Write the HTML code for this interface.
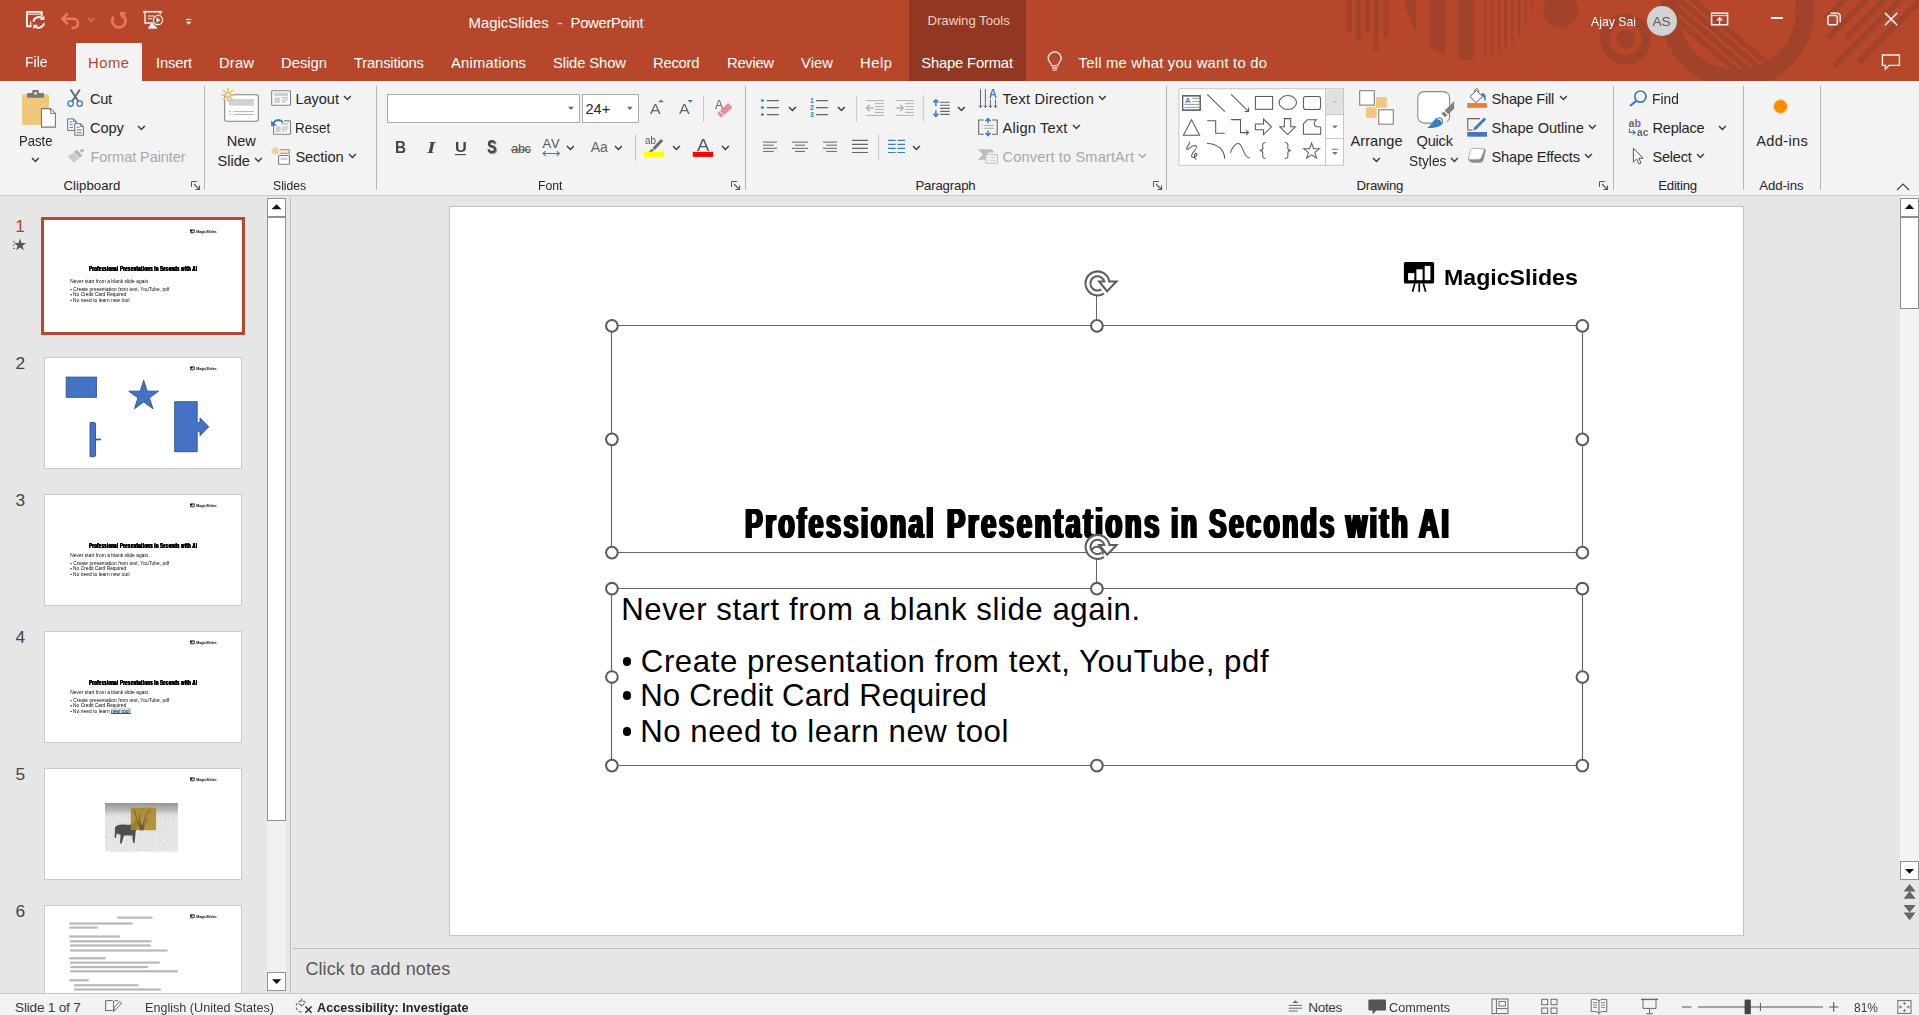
<!DOCTYPE html>
<html><head><meta charset="utf-8"><title>MagicSlides - PowerPoint</title>
<style>
*{box-sizing:border-box;margin:0;padding:0}
html,body{width:1919px;height:1015px;overflow:hidden;background:#e6e6e6;font-family:"Liberation Sans",sans-serif;color:#262626}
#app{position:relative;width:1919px;height:1015px;overflow:hidden}
#app div,#app span,#app svg{position:absolute}
#app svg{overflow:visible}
.t{white-space:nowrap;line-height:1}
#tb{left:0;top:0;width:1919px;height:81px;background:#b7472a;overflow:hidden}
#rb{left:0;top:81px;width:1919px;height:114px;background:#f3f3f3}
#rbl{left:0;top:195px;width:1919px;height:1px;background:#cbcbcb}
.sep{width:1px;background:#b4b4b4;top:86px;height:104px}
#sb{left:0;top:993px;width:1919px;height:22px;background:#f3f3f3}
</style></head><body><div id="app">
<div id="tb"></div><div id="rb"></div><div id="rbl"></div><div id="sb"></div>
<svg style="left:0;top:0;overflow:hidden" width="1919" height="81" viewBox="0 0 1919 81"><g fill="#a1432b"><rect x="1346.9" y="0" width="5" height="32.1"/><rect x="1356" y="0" width="4.7" height="41.3"/><rect x="1365.1" y="0" width="4.9" height="32.1"/><rect x="1373.3" y="0" width="5.1" height="51.9"/><rect x="1383.4" y="0" width="4.8" height="37.9"/><clipPath id="c1"><circle cx="1469.5" cy="-5" r="65"/></clipPath><g clip-path="url(#c1)"><rect x="1400" y="0" width="16" height="70"/><rect x="1429.4" y="0" width="16" height="70"/><rect x="1458" y="0" width="15.5" height="70"/><rect x="1484" y="0" width="2.7" height="70"/><rect x="1491.1" y="0" width="2.5" height="70"/><rect x="1498.2" y="0" width="2.2" height="70"/><rect x="1504.4" y="0" width="2.5" height="70"/><rect x="1511.1" y="0" width="2.5" height="70"/><rect x="1517.9" y="0" width="2.2" height="70"/><rect x="1524.4" y="0" width="2.4" height="70"/><rect x="1531" y="0" width="2.5" height="70"/></g><circle cx="1560.6" cy="10.4" r="17.4"/><circle cx="1625.6" cy="39.2" r="9.3"/><circle cx="1625.6" cy="39.2" r="20.7" fill="none" stroke="#a1432b" stroke-width="9.4"/><circle cx="1737" cy="11" r="67.9" fill="none" stroke="#a1432b" stroke-width="18.2"/><clipPath id="c2"><circle cx="1737" cy="11" r="59.5"/></clipPath><g clip-path="url(#c2)"><g transform="rotate(40.5 1737 11)"><rect x="1660" y="28.5" width="160" height="5.5"/><rect x="1660" y="37" width="160" height="5.5"/><rect x="1660" y="45.5" width="160" height="5.5"/><rect x="1660" y="54" width="160" height="5.5"/></g></g><path d="M1825 19 l90 -90" stroke="#a1432b" stroke-width="6" fill="none"/><path d="M1827.5 38.6 l90 -90" stroke="#a1432b" stroke-width="6" fill="none"/><path d="M1846 38.6 l90 -90" stroke="#a1432b" stroke-width="6" fill="none"/><path d="M1834 66.4 l90 -90" stroke="#a1432b" stroke-width="6" fill="none"/><path d="M1858.6 62.2 l90 -90" stroke="#a1432b" stroke-width="6" fill="none"/></g></svg><div style="left:909px;top:0px;width:117px;height:81px;background:#923822"></div><span class="t" style="left:927.50px;top:14px;font-size:13.2px;color:#f3cfc4;letter-spacing:-0.024px;">Drawing Tools</span><div style="left:76px;top:43px;width:66px;height:38px;background:#f3f3f3"></div><span class="t" style="left:468.60px;top:16px;font-size:14.8px;color:#ffffff;letter-spacing:0.022px;">MagicSlides</span><span class="t" style="left:557.60px;top:16px;font-size:14.8px;color:#ffffff;">-</span><span class="t" style="left:570.60px;top:16px;font-size:14.8px;color:#ffffff;letter-spacing:-0.297px;">PowerPoint</span><span class="t" style="left:25.00px;top:55px;font-size:14.8px;color:#ffffff;transform:scaleX(0.9436);transform-origin:0 0;">File</span><span class="t" style="left:88.00px;top:56px;font-size:14.8px;color:#b7472a;letter-spacing:0.505px;">Home</span><span class="t" style="left:156.00px;top:56px;font-size:14.8px;color:#ffffff;letter-spacing:-0.203px;">Insert</span><span class="t" style="left:219.00px;top:56px;font-size:14.8px;color:#ffffff;letter-spacing:0.156px;">Draw</span><span class="t" style="left:281.00px;top:56px;font-size:14.8px;color:#ffffff;letter-spacing:-0.013px;">Design</span><span class="t" style="left:354.00px;top:56px;font-size:14.8px;color:#ffffff;letter-spacing:-0.183px;">Transitions</span><span class="t" style="left:451.00px;top:56px;font-size:14.8px;color:#ffffff;letter-spacing:0.200px;">Animations</span><span class="t" style="left:553.00px;top:56px;font-size:14.8px;color:#ffffff;letter-spacing:-0.115px;">Slide Show</span><span class="t" style="left:653.00px;top:56px;font-size:14.8px;color:#ffffff;letter-spacing:-0.241px;">Record</span><span class="t" style="left:727.00px;top:56px;font-size:14.8px;color:#ffffff;letter-spacing:-0.306px;">Review</span><span class="t" style="left:801.00px;top:56px;font-size:14.8px;color:#ffffff;letter-spacing:0.062px;">View</span><span class="t" style="left:860.00px;top:56px;font-size:14.8px;color:#ffffff;letter-spacing:0.521px;">Help</span><span class="t" style="left:921.30px;top:56px;font-size:14.8px;color:#ffffff;letter-spacing:-0.188px;">Shape Format</span><span class="t" style="left:1078.60px;top:56px;font-size:14.8px;color:#ffffff;letter-spacing:0.219px;">Tell me what you want to do</span><svg style="left:24px;top:8px;" width="24" height="24" viewBox="0 0 24 24"><path d="M2.9 3.9 H17.7 V8.6 M2.9 3 V18.2 H7.6" fill="none" stroke="#f4f4f4" stroke-width="1.9"/><path d="M4 6.1 H17" fill="none" stroke="#f4f4f4" stroke-width="1.1"/><path d="M6.7 13.4 V18.2" fill="none" stroke="#f4f4f4" stroke-width="1.2"/><path d="M9.4 13.6 A5.5 5.5 0 0 1 19 11" fill="none" stroke="#f4f4f4" stroke-width="1.9"/><path d="M20.2 15.2 A5.5 5.5 0 0 1 10.6 17.8" fill="none" stroke="#f4f4f4" stroke-width="1.9"/><path d="M15.9 12 H20.3 V7.6 Z" fill="#f4f4f4"/><path d="M13.7 16.8 H9.3 V21.2 Z" fill="#f4f4f4"/></svg><svg style="left:59px;top:10px;" width="24" height="22" viewBox="0 0 24 22"><path d="M3.8 8.8 H14.4 A4.6 4.6 0 0 1 14.4 18 L12.8 18" fill="none" stroke="#ea7563" stroke-width="2.6" stroke-linejoin="round"/><path d="M8.8 3.4 L3.2 8.8 L8.8 14.2" fill="none" stroke="#ea7563" stroke-width="2.6"/></svg><svg style="left:87.20px;top:16.90px" width="8.60" height="5.40" viewBox="-1 -1 8.60 5.40"><path d="M0 0 L3.30 3.40 L6.60 0" fill="none" stroke="#ea7563" stroke-width="1.3"/></svg><svg style="left:108px;top:9px;" width="22" height="22" viewBox="0 0 22 22"><path d="M12.6 5.2 A6.7 6.7 0 1 1 5.6 7.6" fill="none" stroke="#ea7563" stroke-width="2.7"/><path d="M11.6 2.6 L18.6 3.4 L13.8 9.8 Z" fill="#ea7563"/></svg><svg style="left:141px;top:9px;" width="26" height="22" viewBox="0 0 26 22"><path d="M2 2.7 H21.2" stroke="#f4f4f4" stroke-width="1.6"/><path d="M4 3 V14 H12.5" fill="none" stroke="#f4f4f4" stroke-width="1.4"/><path d="M19.2 3 V5.5" fill="none" stroke="#f4f4f4" stroke-width="1.4"/><path d="M6.8 7 H13 M6.8 9.8 H11.2" stroke="#f4f4f4" stroke-width="1.1"/><circle cx="17" cy="11" r="4.6" fill="none" stroke="#f4f4f4" stroke-width="1.2"/><path d="M15.5 8.3 L19.3 11 L15.5 13.7 Z" fill="#f4f4f4"/><path d="M10.5 14.5 L7.3 19.2 H16 L13 15.5" fill="#f4f4f4" stroke="#f4f4f4" stroke-width="0.8"/></svg><svg style="left:184px;top:17px;" width="10" height="10" viewBox="0 0 10 10"><path d="M2.1 2.5 H7.3" stroke="#f4f4f4" stroke-width="1.2"/><path d="M1.9 4.8 H7.5 L4.7 7.8 Z" fill="#f4f4f4"/></svg><svg style="left:1709px;top:10px;" width="22" height="18" viewBox="0 0 22 18"><rect x="2.6" y="3.2" width="16" height="11.6" fill="none" stroke="#f4f4f4" stroke-width="1.5"/><path d="M2.6 5.6 H18.6" stroke="#f4f4f4" stroke-width="1"/><path d="M10.6 14 V8 M7.9 10.6 L10.6 7.9 L13.3 10.6" fill="none" stroke="#f4f4f4" stroke-width="1.4"/></svg><div style="left:1770.8px;top:17.4px;width:12.2px;height:1.5px;background:#f4f4f4"></div><svg style="left:1825px;top:10px;" width="18" height="18" viewBox="0 0 18 18"><rect x="2.9" y="5.4" width="9.4" height="9.4" rx="1.8" fill="none" stroke="#f4f4f4" stroke-width="1.45"/><path d="M5.6 3.2 H12.2 A3 3 0 0 1 15.2 6.2 V12.2" fill="none" stroke="#f4f4f4" stroke-width="1.45"/></svg><svg style="left:1882px;top:10px;" width="18" height="18" viewBox="0 0 18 18"><path d="M2.9 2.9 L15.3 15.3 M15.3 2.9 L2.9 15.3" stroke="#f4f4f4" stroke-width="1.5"/></svg><svg style="left:1880px;top:52px;" width="22" height="20" viewBox="0 0 22 20"><path d="M2.4 3 H19.4 V13.4 H9 L5.4 17 V13.4 H2.4 Z" fill="none" stroke="#f4f4f4" stroke-width="1.4"/></svg><svg style="left:1045px;top:50px;" width="20" height="24" viewBox="0 0 20 24"><path d="M6.6 15.6 C6.4 12.8 3.2 11.6 3.2 8.3 A6.5 6.5 0 0 1 16.2 8.3 C16.2 11.6 13 12.8 12.8 15.6 Z" fill="none" stroke="#f4f4f4" stroke-width="1.3"/><path d="M6.9 17.8 H12.5 M7.4 20 H12 " stroke="#f4f4f4" stroke-width="1.2"/></svg><span class="t" style="left:1591.00px;top:15px;font-size:13.6px;color:#ffffff;transform:scaleX(0.9023);transform-origin:0 0;">Ajay Sai</span><div style="left:1646.8px;top:5.8px;width:30px;height:30px;border-radius:50%;background:#d2d2d2"></div><span class="t" style="left:1652.50px;top:15px;font-size:13.6px;color:#5a5a5a;letter-spacing:-0.141px;">AS</span>
<div class="sep" style="left:204.0px"></div><div class="sep" style="left:376.0px"></div><div class="sep" style="left:744.5px"></div><div class="sep" style="left:1166.0px"></div><div class="sep" style="left:1613.0px"></div><div class="sep" style="left:1742.8px"></div><div class="sep" style="left:1820.1px"></div><span class="t" style="left:19.20px;top:134px;font-size:14.6px;color:#262626;transform:scaleX(0.8974);transform-origin:0 0;">Paste</span><svg style="left:30.90px;top:156.55px" width="8.80" height="5.50" viewBox="-1 -1 8.80 5.50"><path d="M0 0 L3.40 3.50 L6.80 0" fill="none" stroke="#3a3a3a" stroke-width="1.45"/></svg><span class="t" style="left:90.10px;top:92px;font-size:14.6px;color:#262626;letter-spacing:-0.409px;">Cut</span><span class="t" style="left:90.10px;top:121px;font-size:14.6px;color:#262626;letter-spacing:-0.126px;">Copy</span><svg style="left:136.80px;top:124.85px" width="8.80" height="5.50" viewBox="-1 -1 8.80 5.50"><path d="M0 0 L3.40 3.50 L6.80 0" fill="none" stroke="#3a3a3a" stroke-width="1.45"/></svg><span class="t" style="left:90.50px;top:150px;font-size:14.6px;color:#a8a8a8;letter-spacing:-0.101px;">Format Painter</span><span class="t" style="left:63.40px;top:179px;font-size:13.2px;color:#262626;letter-spacing:0.068px;">Clipboard</span><svg style="left:190.5px;top:180.5px;" width="10" height="10" viewBox="0 0 10 10"><path d="M0.5 3.5 V0.5 H3.5 M0.5 0.5 H9.5 M0.5 0.5" fill="none" stroke="none"/><path d="M0.5 6 V0.5 H6" fill="none" stroke="#555" stroke-width="1"/><path d="M3 3 L8.5 8.5 M8.5 4.5 V8.5 H4.5" fill="none" stroke="#555" stroke-width="1.1"/></svg><span class="t" style="left:226.70px;top:134px;font-size:14.6px;color:#262626;letter-spacing:-0.052px;">New</span><span class="t" style="left:217.40px;top:154px;font-size:14.6px;color:#262626;letter-spacing:0.037px;">Slide</span><svg style="left:254.00px;top:156.55px" width="8.80" height="5.50" viewBox="-1 -1 8.80 5.50"><path d="M0 0 L3.40 3.50 L6.80 0" fill="none" stroke="#3a3a3a" stroke-width="1.45"/></svg><span class="t" style="left:295.40px;top:92px;font-size:14.6px;color:#262626;letter-spacing:-0.046px;">Layout</span><svg style="left:343.10px;top:94.85px" width="8.80" height="5.50" viewBox="-1 -1 8.80 5.50"><path d="M0 0 L3.40 3.50 L6.80 0" fill="none" stroke="#3a3a3a" stroke-width="1.45"/></svg><span class="t" style="left:295.40px;top:121px;font-size:14.6px;color:#262626;transform:scaleX(0.9259);transform-origin:0 0;">Reset</span><span class="t" style="left:295.40px;top:150px;font-size:14.6px;color:#262626;letter-spacing:-0.081px;">Section</span><svg style="left:348.10px;top:152.65px" width="8.80" height="5.50" viewBox="-1 -1 8.80 5.50"><path d="M0 0 L3.40 3.50 L6.80 0" fill="none" stroke="#3a3a3a" stroke-width="1.45"/></svg><span class="t" style="left:273.30px;top:179px;font-size:13.2px;color:#262626;transform:scaleX(0.9242);transform-origin:0 0;">Slides</span><div style="left:387px;top:94px;width:193px;height:29px;background:#fff;border:1px solid #ababab"></div><div style="left:582px;top:94px;width:57px;height:29px;background:#fff;border:1px solid #ababab"></div><span class="t" style="left:585.40px;top:102px;font-size:14.6px;color:#262626;letter-spacing:0.017px;">24+</span><span class="t" style="left:538.30px;top:179px;font-size:13.2px;color:#262626;transform:scaleX(0.9246);transform-origin:0 0;">Font</span><svg style="left:731px;top:180.5px;" width="10" height="10" viewBox="0 0 10 10"><path d="M0.5 3.5 V0.5 H3.5 M0.5 0.5 H9.5 M0.5 0.5" fill="none" stroke="none"/><path d="M0.5 6 V0.5 H6" fill="none" stroke="#555" stroke-width="1"/><path d="M3 3 L8.5 8.5 M8.5 4.5 V8.5 H4.5" fill="none" stroke="#555" stroke-width="1.1"/></svg><span class="t" style="left:1002.60px;top:92px;font-size:14.6px;color:#262626;letter-spacing:0.215px;">Text Direction</span><svg style="left:1097.90px;top:94.75px" width="8.80" height="5.50" viewBox="-1 -1 8.80 5.50"><path d="M0 0 L3.40 3.50 L6.80 0" fill="none" stroke="#3a3a3a" stroke-width="1.45"/></svg><span class="t" style="left:1002.60px;top:121px;font-size:14.6px;color:#262626;letter-spacing:0.198px;">Align Text</span><svg style="left:1072.00px;top:123.85px" width="8.80" height="5.50" viewBox="-1 -1 8.80 5.50"><path d="M0 0 L3.40 3.50 L6.80 0" fill="none" stroke="#3a3a3a" stroke-width="1.45"/></svg><span class="t" style="left:1002.60px;top:150px;font-size:14.6px;color:#a8a8a8;letter-spacing:0.136px;">Convert to SmartArt</span><svg style="left:1138.00px;top:152.55px" width="8.80" height="5.50" viewBox="-1 -1 8.80 5.50"><path d="M0 0 L3.40 3.50 L6.80 0" fill="none" stroke="#a8a8a8" stroke-width="1.45"/></svg><span class="t" style="left:915.40px;top:179px;font-size:13.2px;color:#262626;letter-spacing:-0.162px;">Paragraph</span><svg style="left:1152.5px;top:180.5px;" width="10" height="10" viewBox="0 0 10 10"><path d="M0.5 3.5 V0.5 H3.5 M0.5 0.5 H9.5 M0.5 0.5" fill="none" stroke="none"/><path d="M0.5 6 V0.5 H6" fill="none" stroke="#555" stroke-width="1"/><path d="M3 3 L8.5 8.5 M8.5 4.5 V8.5 H4.5" fill="none" stroke="#555" stroke-width="1.1"/></svg><span class="t" style="left:1350.60px;top:134px;font-size:14.6px;color:#262626;letter-spacing:0.013px;">Arrange</span><svg style="left:1371.80px;top:156.55px" width="8.80" height="5.50" viewBox="-1 -1 8.80 5.50"><path d="M0 0 L3.40 3.50 L6.80 0" fill="none" stroke="#3a3a3a" stroke-width="1.45"/></svg><span class="t" style="left:1416.50px;top:134px;font-size:14.6px;color:#262626;letter-spacing:-0.203px;">Quick</span><span class="t" style="left:1408.60px;top:154px;font-size:14.6px;color:#262626;transform:scaleX(0.9409);transform-origin:0 0;">Styles</span><svg style="left:1450.40px;top:156.55px" width="8.80" height="5.50" viewBox="-1 -1 8.80 5.50"><path d="M0 0 L3.40 3.50 L6.80 0" fill="none" stroke="#3a3a3a" stroke-width="1.45"/></svg><span class="t" style="left:1491.50px;top:92px;font-size:14.6px;color:#262626;letter-spacing:-0.234px;">Shape Fill</span><svg style="left:1559.00px;top:94.85px" width="8.80" height="5.50" viewBox="-1 -1 8.80 5.50"><path d="M0 0 L3.40 3.50 L6.80 0" fill="none" stroke="#3a3a3a" stroke-width="1.45"/></svg><span class="t" style="left:1491.50px;top:121px;font-size:14.6px;color:#262626;letter-spacing:-0.017px;">Shape Outline</span><svg style="left:1588.20px;top:124.05px" width="8.80" height="5.50" viewBox="-1 -1 8.80 5.50"><path d="M0 0 L3.40 3.50 L6.80 0" fill="none" stroke="#3a3a3a" stroke-width="1.45"/></svg><span class="t" style="left:1491.50px;top:150px;font-size:14.6px;color:#262626;letter-spacing:-0.176px;">Shape Effects</span><svg style="left:1584.20px;top:153.05px" width="8.80" height="5.50" viewBox="-1 -1 8.80 5.50"><path d="M0 0 L3.40 3.50 L6.80 0" fill="none" stroke="#3a3a3a" stroke-width="1.45"/></svg><span class="t" style="left:1356.50px;top:179px;font-size:13.2px;color:#262626;letter-spacing:-0.263px;">Drawing</span><svg style="left:1599px;top:180.5px;" width="10" height="10" viewBox="0 0 10 10"><path d="M0.5 3.5 V0.5 H3.5 M0.5 0.5 H9.5 M0.5 0.5" fill="none" stroke="none"/><path d="M0.5 6 V0.5 H6" fill="none" stroke="#555" stroke-width="1"/><path d="M3 3 L8.5 8.5 M8.5 4.5 V8.5 H4.5" fill="none" stroke="#555" stroke-width="1.1"/></svg><span class="t" style="left:1652.40px;top:92px;font-size:14.6px;color:#262626;transform:scaleX(0.9475);transform-origin:0 0;">Find</span><span class="t" style="left:1652.40px;top:121px;font-size:14.6px;color:#262626;letter-spacing:-0.208px;">Replace</span><svg style="left:1717.80px;top:124.85px" width="8.80" height="5.50" viewBox="-1 -1 8.80 5.50"><path d="M0 0 L3.40 3.50 L6.80 0" fill="none" stroke="#3a3a3a" stroke-width="1.45"/></svg><span class="t" style="left:1652.40px;top:150px;font-size:14.6px;color:#262626;letter-spacing:-0.233px;">Select</span><svg style="left:1695.80px;top:152.85px" width="8.80" height="5.50" viewBox="-1 -1 8.80 5.50"><path d="M0 0 L3.40 3.50 L6.80 0" fill="none" stroke="#3a3a3a" stroke-width="1.45"/></svg><span class="t" style="left:1658.20px;top:179px;font-size:13.2px;color:#262626;letter-spacing:-0.221px;">Editing</span><div style="left:1774.4px;top:100.1px;width:13px;height:13px;border-radius:50%;background:#ff8c00;box-shadow:0 0 1.5px #ff8c00"></div><span class="t" style="left:1756.30px;top:134px;font-size:14.6px;color:#262626;letter-spacing:0.336px;">Add-ins</span><span class="t" style="left:1759.20px;top:179px;font-size:13.2px;color:#262626;letter-spacing:-0.053px;">Add-ins</span><svg style="left:1896px;top:183px;" width="14" height="8" viewBox="0 0 14 8"><path d="M1 7 L7 1 L13 7" fill="none" stroke="#444" stroke-width="1.2"/></svg><svg style="left:0;top:0" width="1919" height="200" viewBox="0 0 1919 200"><rect x="22" y="94.2" width="27" height="30.8" rx="1.6" fill="#efc77d"/><rect x="32.2" y="90" width="6.6" height="4" rx="1" fill="#787878"/><rect x="27.1" y="92.9" width="16.9" height="4.9" rx="0.8" fill="#787878"/><rect x="34.4" y="92.2" width="2.3" height="2.3" fill="#fff"/><path d="M41.5 108.6 H50.6 L55.4 113.4 V127.1 H41.5 Z" fill="#fff" stroke="#787878" stroke-width="1.1"/><path d="M50.6 108.6 V113.4 H55.4" fill="none" stroke="#787878" stroke-width="1"/><path d="M70.6 89.4 L78.3 101.2 M79.9 89.4 L72.2 101.2" stroke="#6a6a6a" stroke-width="1.9" fill="none"/><circle cx="70.6" cy="103.6" r="2.7" fill="none" stroke="#3b7cc0" stroke-width="1.3"/><circle cx="79.7" cy="103.6" r="2.7" fill="none" stroke="#3b7cc0" stroke-width="1.3"/><path d="M67.7 118.9 H73.6 L76.3 121.6 V130.4 H67.7 Z" fill="#fff" stroke="#6a6a6a" stroke-width="1"/><path d="M73.6 118.9 V121.6 H76.3" fill="none" stroke="#6a6a6a" stroke-width="0.9"/><path d="M69.6 122 H72.6 M69.6 124.8 H72.9 M69.6 127.6 H72.9" stroke="#3b7cc0" stroke-width="1"/><path d="M74.8 123.7 H80.6 L83.4 126.5 V135.2 H74.8 Z" fill="#fff" stroke="#6a6a6a" stroke-width="1"/><path d="M80.6 123.7 V126.5 H83.4" fill="none" stroke="#6a6a6a" stroke-width="0.9"/><path d="M76.7 127.2 H79.6 M76.7 130 H81.7 M76.7 132.7 H81.7" stroke="#3b7cc0" stroke-width="1"/><path d="M67.8 156.2 L74.2 152.6 L79 158.4 L73.8 162.8 Z" fill="#cfcacf"/><path d="M74.2 151.8 L76.8 149.8 L82.2 155.6 L79.6 157.8 Z" fill="#b5b2b5"/><path d="M79.6 150.6 L82.8 148.4 L84.4 150.4 L81.4 152.8 Z" fill="#b5b2b5"/><rect x="224.7" y="94.7" width="33.6" height="26.6" rx="2.2" fill="#fff" stroke="#808080" stroke-width="1.1"/><rect x="229" y="99" width="25" height="6.7" fill="#d0d0d0"/><path d="M229 111.6 H231 M233.3 111.6 H254 M229 114.6 H231 M233.3 114.6 H254" stroke="#a8a8a8" stroke-width="0.9"/><path d="M229.26 94.90 L234.90 94.90 M228.89 95.79 L232.88 99.78 M228.00 96.16 L228.00 101.80 M227.11 95.79 L223.12 99.78 M226.74 94.90 L221.10 94.90 M227.11 94.01 L223.12 90.02 M228.00 93.64 L228.00 88.00 M228.89 94.01 L232.88 90.02" stroke="#ebbf78" stroke-width="1.7" fill="none"/><circle cx="228" cy="94.9" r="2.1" fill="#fff" stroke="#ebbf78" stroke-width="1.36"/><rect x="271.7" y="90.7" width="18.8" height="14.5" rx="0.8" fill="#fff" stroke="#808080" stroke-width="1.1"/><rect x="274.2" y="92.6" width="13.8" height="3.6" fill="#d0d0d0"/><rect x="274.2" y="97.4" width="5.8" height="5.7" fill="#d0d0d0"/><path d="M281.8 97.8 H288 M281.8 99.9 H288 M281.8 102 H286" stroke="#a8a8a8" stroke-width="0.9"/><rect x="273.6" y="120.9" width="16.9" height="13.4" rx="0.8" fill="#fff" stroke="#808080" stroke-width="1.1"/><rect x="275.6" y="126.2" width="5.2" height="6.2" fill="#d0d0d0"/><rect x="281" y="122.6" width="7.7" height="2.4" fill="#d0d0d0"/><path d="M282 127 H288.6 M282 129 H288.6 M282 131 H286.6" stroke="#a8a8a8" stroke-width="0.9"/><path d="M272.6 124.6 C273.6 119.6 280.4 117.8 283.2 122.4" fill="none" stroke="#f3f3f3" stroke-width="3.4"/><path d="M273.2 124.2 C274.2 119.8 280.4 118.4 282.8 122.6" fill="none" stroke="#3b7cc0" stroke-width="1.9"/><path d="M270.9 120.6 L271.3 126.2 L276.9 125.4 Z" fill="#3b7cc0"/><path d="M276.22 150.60 L279.60 150.60 M276.01 151.11 L278.40 153.50 M275.50 151.32 L275.50 154.70 M274.99 151.11 L272.60 153.50 M274.78 150.60 L271.40 150.60 M274.99 150.09 L272.60 147.70 M275.50 149.88 L275.50 146.50 M276.01 150.09 L278.40 147.70" stroke="#ebbf78" stroke-width="1.1" fill="none"/><circle cx="275.5" cy="150.6" r="1.2" fill="#fff" stroke="#ebbf78" stroke-width="0.8800000000000001"/><path d="M280.2 149.7 H289.3 V153.2 H280.2" fill="none" stroke="#e8722a" stroke-width="1.1"/><rect x="278.6" y="155.5" width="10.8" height="8.8" rx="0.6" fill="#fff" stroke="#808080" stroke-width="1.1"/><rect x="280.6" y="157.5" width="6.8" height="2.6" fill="#d0d0d0"/><path d="M568 106.8 H573.8 L570.9 110.1 Z" fill="#666"/><path d="M627 106.8 H632.8 L629.9 110.1 Z" fill="#666"/><path d="M658.1 102.2 L661 99.6 L663.9 102.2 Z" fill="#3b7cc0"/><path d="M687.3 99.9 H693.1 L690.2 102.7 Z" fill="#3b7cc0"/><path d="M703.5 95.2 V121.7 M635.5 134.3 V160.8" stroke="#c6c6c6" stroke-width="1"/><g transform="rotate(-43 724.85 110.35)"><rect x="717.25" y="107.3" width="15.2" height="6.1" rx="1.2" fill="#e88b9b"/><rect x="720.2" y="107.3" width="0.9" height="6.1" fill="#f3f3f3"/></g><path d="M454.9 154.6 H465.9" stroke="#444" stroke-width="1.1"/><path d="M510.6 149.9 H531.3" stroke="#555" stroke-width="1"/><path d="M543 153.5 H559.4 M545.6 151.2 L543 153.5 L545.6 155.8 M556.8 151.2 L559.4 153.5 L556.8 155.8" fill="none" stroke="#3b7cc0" stroke-width="1.1"/><rect x="643.9" y="151.8" width="20.2" height="5.1" fill="#ffff00"/><rect x="692.8" y="151.8" width="20.3" height="5.1" fill="#ff0000"/><path d="M661 138.9 L663.3 140.8 L654.8 150 L652.5 148.1 Z" fill="#6a6a6a"/><path d="M652 148.7 L654.2 150.6 L651.6 151.8 H648.6 Z" fill="#6a6a6a"/></svg><span class="t" style="left:394.50px;top:139px;font-size:16.3px;color:#444;font-weight:700;transform:scaleX(0.9434);transform-origin:0 0;">B</span><span class="t" style="left:427.20px;top:139px;font-size:17.6px;color:#444;font-weight:700;font-style:italic;font-family:'Liberation Serif',serif;transform:scaleX(1.25);transform-origin:0 0;">I</span><span class="t" style="left:454.60px;top:139px;font-size:15px;color:#444;font-weight:700;transform:scaleX(1.0882);transform-origin:0 0;">U</span><span class="t" style="left:486.60px;top:137px;font-size:19px;color:#444;font-weight:700;text-shadow:1.2px 1.2px 1.2px rgba(0,0,0,0.45);transform:scaleX(0.75);transform-origin:0 0;">S</span><span class="t" style="left:511.20px;top:143px;font-size:12.6px;color:#555;letter-spacing:-0.306px;">abc</span><span class="t" style="left:542.60px;top:137px;font-size:13px;color:#555;letter-spacing:0.709px;">AV</span><svg style="left:566.00px;top:144.65px" width="8.80" height="5.50" viewBox="-1 -1 8.80 5.50"><path d="M0 0 L3.40 3.50 L6.80 0" fill="none" stroke="#3a3a3a" stroke-width="1.45"/></svg><svg style="left:614.00px;top:144.65px" width="8.80" height="5.50" viewBox="-1 -1 8.80 5.50"><path d="M0 0 L3.40 3.50 L6.80 0" fill="none" stroke="#3a3a3a" stroke-width="1.45"/></svg><svg style="left:672.10px;top:144.65px" width="8.80" height="5.50" viewBox="-1 -1 8.80 5.50"><path d="M0 0 L3.40 3.50 L6.80 0" fill="none" stroke="#3a3a3a" stroke-width="1.45"/></svg><svg style="left:720.90px;top:144.65px" width="8.80" height="5.50" viewBox="-1 -1 8.80 5.50"><path d="M0 0 L3.40 3.50 L6.80 0" fill="none" stroke="#3a3a3a" stroke-width="1.45"/></svg><span class="t" style="left:590.70px;top:140px;font-size:14px;color:#666;letter-spacing:-0.125px;">Aa</span><span class="t" style="left:650.10px;top:102px;font-size:14.6px;color:#666;transform:scaleX(1.0889);transform-origin:0 0;">A</span><span class="t" style="left:679.00px;top:102px;font-size:14px;color:#666;transform:scaleX(1.1452);transform-origin:0 0;">A</span><span class="t" style="left:714.70px;top:98px;font-size:13.6px;color:#666;transform:scaleX(0.9033);transform-origin:0 0;">A</span><span class="t" style="left:644.60px;top:135px;font-size:10.6px;color:#555;transform:scaleX(0.9240);transform-origin:0 0;">ab</span><span class="t" style="left:696.70px;top:137px;font-size:17.2px;color:#555;transform:scaleX(1.0812);transform-origin:0 0;">A</span><svg style="left:0;top:0" width="1919" height="200" viewBox="0 0 1919 200"><circle cx="762.4" cy="100.6" r="1.45" fill="#3b7cc0"/><circle cx="762.4" cy="107.6" r="1.45" fill="#3b7cc0"/><circle cx="762.4" cy="114.6" r="1.45" fill="#3b7cc0"/><path d="M766.9 100.6 H778.9 M766.9 107.6 H778.9 M766.9 114.6 H778.9" stroke="#666" stroke-width="1.1" fill="none"/><path d="M816 100.6 H827.9 M816 107.6 H827.9 M816 114.6 H827.9" stroke="#666" stroke-width="1.1" fill="none"/><path d="M856.6 95.2 V121.9 M923.3 95.2 V121.9 M878.7 134.2 V160.4" stroke="#c6c6c6" stroke-width="1"/><path d="M866 100.6 H883.9 M875 103.6 H883.9 M875 106.6 H883.9 M875 109.5 H883.9 M875 112.5 H883.9 M866 115.4 H883.9" stroke="#b4b4b4" stroke-width="1" fill="none"/><path d="M866.6 108.1 H873.6 M869.6 105 L866.5 108.1 L869.6 111.2" fill="none" stroke="#b4b4b4" stroke-width="1.5"/><path d="M895.9 100.6 H913.9 M905 103.6 H913.9 M905 106.6 H913.9 M905 109.5 H913.9 M905 112.5 H913.9 M895.9 115.4 H913.9" stroke="#b4b4b4" stroke-width="1" fill="none"/><path d="M896.2 108.1 H903.2 M900.2 105 L903.3 108.1 L900.2 111.2" fill="none" stroke="#b4b4b4" stroke-width="1.5"/><path d="M940.2 102.3 H949.7 M940.2 105.3 H949.7 M940.2 108.4 H949.7 M940.2 111.4 H949.7 M940.2 114.4 H949.7" stroke="#666" stroke-width="1.1" fill="none"/><path d="M935.9 100 V106.2 M933.3 102.6 L935.9 99.9 L938.5 102.6 M935.9 110.4 V116.4 M933.3 113.8 L935.9 116.5 L938.5 113.8" fill="none" stroke="#3b7cc0" stroke-width="1.5"/><path d="M763 142.1 H777 M763 145.2 H773.8 M763 148.3 H777 M763 151.4 H773.8" stroke="#666" stroke-width="1" fill="none"/><path d="M792 142.1 H808 M795 145.2 H805 M792 148.3 H808 M795 151.4 H805" stroke="#666" stroke-width="1" fill="none"/><path d="M823 142.1 H837 M826.2 145.2 H837 M823 148.3 H837 M826.2 151.4 H837" stroke="#666" stroke-width="1" fill="none"/><path d="M852 140.3 H867.9 M852 144.4 H867.9 M852 148.4 H867.9 M852 152.5 H867.9" stroke="#666" stroke-width="1.15" fill="none"/><path d="M888.1 140.3 H895.6 M888.1 144.4 H895.6 M888.1 148.4 H895.6 M888.1 152.5 H895.6" stroke="#3b7cc0" stroke-width="1.15" fill="none"/><path d="M897.3 140.3 H905 M897.3 144.4 H905 M897.3 148.4 H905 M897.3 152.5 H905" stroke="#3b7cc0" stroke-width="1.15" fill="none"/><path d="M980.5 89.1 V107.4 M985.4 89.1 V107.4 M990.4 99.3 V107.4 M995.5 99.3 V107.4" stroke="#666" stroke-width="1"/><path d="M978.9 105.6 L980.5 107.6 L982.1 105.6" fill="none" stroke="#666" stroke-width="1"/><path d="M983.8 105.6 L985.4 107.6 L987.0 105.6" fill="none" stroke="#666" stroke-width="1"/><path d="M988.8 105.6 L990.4 107.6 L992.0 105.6" fill="none" stroke="#666" stroke-width="1"/><path d="M993.9 105.6 L995.5 107.6 L997.1 105.6" fill="none" stroke="#666" stroke-width="1"/><path d="M983.8 120 H978.7 V134.2 H983.8 M992 120 H997.2 V134.2 H992" fill="none" stroke="#666" stroke-width="1.1"/><path d="M984.4 125.4 H993.9 M984.4 128.3 H993.9" stroke="#a0a0a0" stroke-width="0.9"/><path d="M981.6 125.4 H982.6 M981.6 128.3 H982.6" stroke="#a0a0a0" stroke-width="0.9"/><path d="M988 118.6 V123.3 M985.4 121.2 L988 118.5 L990.6 121.2 M988 130.4 V135.4 M985.4 132.9 L988 135.6 L990.6 132.9" fill="none" stroke="#3b7cc0" stroke-width="1.5"/><path d="M978 149.2 H991.6 L994.4 152.4 H988 V159.8 H978 L982.8 154.5 Z" fill="#bdbbbd"/><rect x="985.8" y="154.6" width="11.7" height="8.6" fill="#f6eff6" stroke="#c3c0c3" stroke-width="1"/><path d="M988 157.6 H989 M990.6 157.6 H995.4 M988 160.4 H989 M990.6 160.4 H995.4" stroke="#cdc9cd" stroke-width="0.9"/><rect x="1178.9" y="88.7" width="164.6" height="76.6" fill="#fff" stroke="#c6c6c6" stroke-width="1"/><rect x="1326.1" y="89.2" width="16.9" height="25" fill="#e1e1e1"/><path d="M1325.6 88.7 V165.3 M1325.6 114.6 H1343.5 M1325.6 138.6 H1343.5" stroke="#c6c6c6" stroke-width="1" fill="none"/><path d="M1332 103 L1334.9 100.2 L1337.8 103 Z" fill="#c8c8c8"/><path d="M1332 125.6 H1337.8 L1334.9 128.6 Z" fill="#777"/><path d="M1331.8 149.3 H1338" stroke="#777" stroke-width="1"/><path d="M1332 152 H1337.8 L1334.9 155 Z" fill="#777"/><g fill="none" stroke="#5a5a5a" stroke-width="1.05"><rect x="1182.6" y="95.8" width="17.6" height="14.3" fill="#fff"/><rect x="1182.6" y="95.8" width="17.6" height="14.3" fill="none" stroke="#5a5a5a" stroke-width="1.2"/><path d="M1192.2 98.4 H1199 M1192.2 101.4 H1199 M1184.3 104.4 H1199 M1184.3 107.4 H1199" stroke="#8a8a8a" stroke-width="0.9" fill="none"/><path d="M1207.2 94.3 L1224.8 111.7"/><path d="M1231.1 94.3 L1248.5 111.4 M1248.6 107.6 V111.5 H1244.7"/><rect x="1255.4" y="96.5" width="17.2" height="12.8"/><ellipse cx="1287.8" cy="102.5" rx="8.7" ry="7"/><rect x="1303.4" y="96.5" width="17.2" height="13" rx="2.6"/><path d="M1191.5 119.8 L1183.4 135.3 H1199.6 Z"/><path d="M1207.2 120.7 H1215.7 V133.3 H1224.8"/><path d="M1231.1 119.6 H1240.5 V132.6 H1248.4 M1246 130 L1248.6 132.6 L1246 135.2"/><path d="M1255.4 123.9 H1263.5 V119 L1271.5 126.8 L1263.5 134.6 V129.7 H1255.4 Z"/><path d="M1284.4 118.6 H1290.7 V126.7 H1295.4 L1287.6 134.6 L1279.7 126.7 H1284.4 Z"/><path d="M1303.4 134.2 V124 L1307.3 119.7 H1316.4 C1313.4 122 1313.4 126 1316.6 126.8 H1319.2 Q1320.7 126.8 1320.7 128.3 V134.2 Z"/><path d="M1189.4 141.7 C1190.4 145 1185.6 147 1186.6 149 C1188 151 1192.4 143.6 1196 146 C1198.6 148.4 1190.4 153.6 1191.6 156.6 C1193 159 1198.4 155.6 1196.6 153.6 C1194.6 152.4 1193 157.6 1196.4 159.6"/><path d="M1207 143.4 C1218 143.6 1224.6 150 1224.6 158.8"/><path d="M1230.2 152.9 C1232.6 146.6 1235.6 143.4 1238.4 143.5 C1243.4 144 1243 158 1249.6 158"/><path d="M1265.6 142.6 C1261.4 142.4 1263 146.4 1262.8 148.4 C1262.6 150 1261 150.4 1259.6 150.5 C1261 150.6 1262.6 151 1262.8 152.6 C1263 154.6 1261.4 158.6 1265.6 158.4"/><path d="M1285 142.6 C1289.2 142.4 1287.6 146.4 1287.8 148.4 C1288 150 1289.6 150.4 1291 150.5 C1289.6 150.6 1288 151 1287.8 152.6 C1287.6 154.6 1289.2 158.6 1285 158.4"/><polygon points="1311.60,143.10 1313.60,148.65 1319.49,148.84 1314.83,152.45 1316.48,158.11 1311.60,154.80 1306.72,158.11 1308.37,152.45 1303.71,148.84 1309.60,148.65"/></g><rect x="1376" y="97.1" width="10.8" height="10.7" fill="#efc77d"/><rect x="1366" y="107.2" width="10.7" height="10.7" fill="#efc77d"/><rect x="1359.7" y="90.7" width="14.6" height="14.4" fill="#fff" stroke="#808080" stroke-width="1.1"/><rect x="1378.7" y="109.8" width="14.6" height="14.4" fill="#fff" stroke="#808080" stroke-width="1.1"/><rect x="1417.8" y="91.6" width="31.8" height="31.5" rx="6.4" fill="#fff" stroke="#8a8a8a" stroke-width="1.1"/><path d="M1441.2 121.4 L1428.4 128.2 L1446.6 127.2 L1450.8 122 Z" fill="#f3f3f3"/><path d="M1454.2 101.2 V108.8 L1448.2 114.2 L1444.6 110.6 Z" fill="#808080"/><path d="M1443.8 111.4 L1447.4 115 L1445 117.2 L1441.4 113.6 Z" fill="#808080"/><path d="M1427 127.9 C1432.6 124.6 1433 118.4 1438.6 117.4 C1441.4 117 1443.6 119.6 1442.8 122.4 C1441.6 126.8 1435 128.2 1427 127.9 Z" fill="#3b7cc0"/><path d="M1437.6 119.4 C1439.4 118 1441.8 119.6 1441.2 121.8" fill="none" stroke="#fff" stroke-width="1.1"/><rect x="1467.2" y="103.1" width="19.8" height="4.7" fill="#ed7d31"/><path d="M1481.6 93 C1486 93 1487 98 1484.4 101.6 C1484.6 98.4 1483.6 96 1481.6 95.2 Z" fill="#3b7cc0"/><path d="M1476.4 90.4 L1482.6 96.4 L1476.2 102.6 L1470 96.6 Z" fill="#fff" stroke="#5a5a5a" stroke-width="1"/><path d="M1474.6 91.8 C1473.8 88.2 1478.8 87.4 1478.8 91.8" fill="none" stroke="#5a5a5a" stroke-width="0.9"/><rect x="1467.2" y="132" width="19.8" height="4.7" fill="#4472c4"/><path d="M1480 118.6 H1467.8 V130 H1472.5" fill="none" stroke="#666" stroke-width="1.1"/><path d="M1484.2 117.6 L1486.2 119.6 L1476.2 129.6 L1473.2 130.6 L1474.2 127.6 Z" fill="#3b7cc0"/><path d="M1471.4 148.4 H1483 Q1486.2 148.4 1485.6 151.6 L1483.6 159.6 Q1482.8 162.8 1479.6 162.8 H1472.6 Q1467.4 161.6 1468.2 157.6 Z" fill="#8a8a8a"/><path d="M1472 148.4 H1482 Q1484.6 148.4 1484 151 L1481.4 157.6 Q1480.6 159.4 1478.6 159.4 H1468.6 Q1468 158.6 1468.4 157.4 L1470.6 150 Q1471 148.4 1472 148.4 Z" fill="#fff" stroke="#9a9a9a" stroke-width="0.6"/><circle cx="1640.4" cy="96.6" r="5.6" fill="none" stroke="#3b7cc0" stroke-width="1.7"/><path d="M1636.2 100.8 L1630 106" stroke="#3b7cc0" stroke-width="2.2"/><path d="M1629.4 128.6 V132.4 H1635 M1632.8 130.2 L1635.2 132.4 L1632.8 134.6" fill="none" stroke="#3b7cc0" stroke-width="1.1"/><path d="M1633.4 148.2 V162 L1636.6 159 L1639 164 L1641 163 L1638.8 158.2 H1643 Z" fill="#fff" stroke="#555" stroke-width="1"/></svg><span class="t" style="left:809.90px;top:97px;font-size:7px;color:#3b7cc0;font-weight:700;">1</span><span class="t" style="left:809.90px;top:104px;font-size:7px;color:#3b7cc0;font-weight:700;">2</span><span class="t" style="left:809.90px;top:111px;font-size:7px;color:#3b7cc0;font-weight:700;">3</span><span class="t" style="left:1185.00px;top:97px;font-size:7.6px;color:#3b7cc0;font-weight:700;">A</span><span class="t" style="left:989.10px;top:87px;font-size:13.2px;color:#3b7cc0;font-weight:700;transform:scaleX(0.8393);transform-origin:0 0;">A</span><span class="t" style="left:1628.60px;top:118px;font-size:10.6px;color:#666;font-weight:700;">a</span><span class="t" style="left:1634.60px;top:118px;font-size:10.6px;color:#8e5ab5;font-weight:700;">b</span><span class="t" style="left:1636.60px;top:127px;font-size:10.6px;color:#666;font-weight:700;transform:scaleX(0.9579);transform-origin:0 0;">ac</span><svg style="left:787.90px;top:105.85px" width="8.80" height="5.50" viewBox="-1 -1 8.80 5.50"><path d="M0 0 L3.40 3.50 L6.80 0" fill="none" stroke="#3a3a3a" stroke-width="1.45"/></svg><svg style="left:836.90px;top:105.85px" width="8.80" height="5.50" viewBox="-1 -1 8.80 5.50"><path d="M0 0 L3.40 3.50 L6.80 0" fill="none" stroke="#3a3a3a" stroke-width="1.45"/></svg><svg style="left:956.90px;top:105.85px" width="8.80" height="5.50" viewBox="-1 -1 8.80 5.50"><path d="M0 0 L3.40 3.50 L6.80 0" fill="none" stroke="#3a3a3a" stroke-width="1.45"/></svg><svg style="left:912.00px;top:144.75px" width="8.80" height="5.50" viewBox="-1 -1 8.80 5.50"><path d="M0 0 L3.40 3.50 L6.80 0" fill="none" stroke="#3a3a3a" stroke-width="1.45"/></svg>
<span class="t" style="left:15.20px;top:218px;font-size:17.4px;color:#c43e1c;">1</span><span class="t" style="left:15.60px;top:355px;font-size:17.4px;color:#444;">2</span><span class="t" style="left:15.60px;top:492px;font-size:17.4px;color:#444;">3</span><span class="t" style="left:15.60px;top:629px;font-size:17.4px;color:#444;">4</span><span class="t" style="left:15.60px;top:766px;font-size:17.4px;color:#444;">5</span><span class="t" style="left:15.60px;top:903px;font-size:17.4px;color:#444;">6</span><svg style="left:0px;top:0px;" width="40" height="260" viewBox="0 0 40 260"><polygon points="20.00,238.60 21.53,242.90 26.09,243.02 22.47,245.80 23.76,250.18 20.00,247.60 16.24,250.18 17.53,245.80 13.91,243.02 18.47,242.90" fill="#555"/><path d="M13.2 241.6 H15 M12.8 245 H14.4 M13.2 248.4 H15" stroke="#666" stroke-width="1"/></svg><div style="left:41px;top:217px;width:204px;height:118px;background:#b8462a"></div><div style="left:44px;top:220px;width:198px;height:112px;background:#fff;overflow:hidden"></div><div style="left:44px;top:220px;width:198px;height:111px;overflow:hidden"><div style="left:0;top:0;width:1293px;height:728px;transform:scale(0.15313);transform-origin:0 0"><div style="left:0px;top:7px"><svg style="left:950px;top:51px;" width="40" height="38" viewBox="0 0 40 38"><rect x="3.9" y="4" width="30.2" height="21.6" rx="1.6" fill="#000"/><rect x="8" y="15.1" width="6.3" height="7.1" fill="#fff"/><rect x="16.4" y="11.3" width="6.2" height="10.9" fill="#fff"/><rect x="24.7" y="7.9" width="5.7" height="14.3" fill="#fff"/><path d="M14.8 25.6 L12.5 33.7 M19.2 25.6 V33.7 M23.3 25.6 L25.7 33.7" stroke="#000" stroke-width="1.7" fill="none"/></svg><span class="t" style="left:993.60px;top:60px;font-size:22.4px;color:#000;font-weight:700;transform:scaleX(1.0338);transform-origin:0 0;">MagicSlides</span></div><div style="left:0px;top:0px"><span class="t" style="left:295.30px;top:295px;font-size:43px;color:#000;font-weight:700;transform:scaleX(0.6195);transform-origin:0 0;letter-spacing:4.2px;text-shadow:1.1px 0 #000,-1.1px 0 #000,2.2px 0 #000,-2.2px 0 #000;">Professional</span><span class="t" style="left:496.60px;top:295px;font-size:43px;color:#000;font-weight:700;transform:scaleX(0.6342);transform-origin:0 0;letter-spacing:4.2px;text-shadow:1.1px 0 #000,-1.1px 0 #000,2.2px 0 #000,-2.2px 0 #000;">Presentations</span><span class="t" style="left:720.50px;top:295px;font-size:43px;color:#000;font-weight:700;transform:scaleX(0.6155);transform-origin:0 0;letter-spacing:4.2px;text-shadow:1.1px 0 #000,-1.1px 0 #000,2.2px 0 #000,-2.2px 0 #000;">in</span><span class="t" style="left:759.10px;top:295px;font-size:43px;color:#000;font-weight:700;transform:scaleX(0.6126);transform-origin:0 0;letter-spacing:4.2px;text-shadow:1.1px 0 #000,-1.1px 0 #000,2.2px 0 #000,-2.2px 0 #000;">Seconds</span><span class="t" style="left:895.70px;top:295px;font-size:43px;color:#000;font-weight:700;transform:scaleX(0.6266);transform-origin:0 0;letter-spacing:4.2px;text-shadow:1.1px 0 #000,-1.1px 0 #000,2.2px 0 #000,-2.2px 0 #000;">with</span><span class="t" style="left:969.40px;top:295px;font-size:43px;color:#000;font-weight:700;transform:scaleX(0.6361);transform-origin:0 0;letter-spacing:4.2px;text-shadow:1.1px 0 #000,-1.1px 0 #000,2.2px 0 #000,-2.2px 0 #000;">AI</span></div><span class="t" style="left:171.20px;top:387px;font-size:31.2px;color:#000;letter-spacing:0.549px;">Never start from a blank slide again.</span><span class="t" style="left:190.80px;top:439px;font-size:31.2px;color:#000;letter-spacing:0.569px;">Create presentation from text, YouTube, pdf</span><span class="t" style="left:190.20px;top:473px;font-size:31.2px;color:#000;letter-spacing:0.154px;">No Credit Card Required</span><span class="t" style="left:190.20px;top:509px;font-size:31.2px;color:#000;letter-spacing:0.532px;">No need to learn new tool</span><div style="left:172.89999999999998px;top:450.4px;width:8.2px;height:8.2px;border-radius:50%;background:#000"></div><div style="left:172.89999999999998px;top:484.4px;width:8.2px;height:8.2px;border-radius:50%;background:#000"></div><div style="left:172.89999999999998px;top:520.4px;width:8.2px;height:8.2px;border-radius:50%;background:#000"></div></div></div><div style="left:43.7px;top:356.7px;width:198.3px;height:112.2px;background:#fff;border:1px solid #c9c9c9;overflow:hidden"></div><div style="left:44px;top:357px;width:198px;height:111px;overflow:hidden"><svg style="left:0;top:0" width="198" height="111" viewBox="0 0 198 111"><g fill="#4472c4" stroke="#2f528f" stroke-width="0.9"><rect x="22.2" y="20.1" width="30.2" height="20.2"/><polygon points="99.70,23.30 103.23,34.15 114.63,34.15 105.41,40.85 108.93,51.70 99.70,45.00 90.47,51.70 93.99,40.85 84.77,34.15 96.17,34.15"/><path d="M130.7 44.7 H153.2 V65.5 H156 V60.8 L164.8 69.7 L156 78.8 V74.2 H153.2 V94.7 H130.7 Z"/><path d="M46 65.5 H50.4 Q51.5 65.7 51.5 66.8 V82.1 H56.5 V82.9 H51.5 V98.4 Q51.5 99.5 50.4 99.7 H46 Z"/></g></svg><div style="left:0;top:0;width:1293px;height:728px;transform:scale(0.15313);transform-origin:0 0"><div style="left:0px;top:7px"><svg style="left:950px;top:51px;" width="40" height="38" viewBox="0 0 40 38"><rect x="3.9" y="4" width="30.2" height="21.6" rx="1.6" fill="#000"/><rect x="8" y="15.1" width="6.3" height="7.1" fill="#fff"/><rect x="16.4" y="11.3" width="6.2" height="10.9" fill="#fff"/><rect x="24.7" y="7.9" width="5.7" height="14.3" fill="#fff"/><path d="M14.8 25.6 L12.5 33.7 M19.2 25.6 V33.7 M23.3 25.6 L25.7 33.7" stroke="#000" stroke-width="1.7" fill="none"/></svg><span class="t" style="left:993.60px;top:60px;font-size:22.4px;color:#000;font-weight:700;transform:scaleX(1.0338);transform-origin:0 0;">MagicSlides</span></div></div></div><div style="left:43.7px;top:493.7px;width:198.3px;height:112.2px;background:#fff;border:1px solid #c9c9c9;overflow:hidden"></div><div style="left:44px;top:494px;width:198px;height:111px;overflow:hidden"><div style="left:0;top:0;width:1293px;height:728px;transform:scale(0.15313);transform-origin:0 0"><div style="left:0px;top:7px"><svg style="left:950px;top:51px;" width="40" height="38" viewBox="0 0 40 38"><rect x="3.9" y="4" width="30.2" height="21.6" rx="1.6" fill="#000"/><rect x="8" y="15.1" width="6.3" height="7.1" fill="#fff"/><rect x="16.4" y="11.3" width="6.2" height="10.9" fill="#fff"/><rect x="24.7" y="7.9" width="5.7" height="14.3" fill="#fff"/><path d="M14.8 25.6 L12.5 33.7 M19.2 25.6 V33.7 M23.3 25.6 L25.7 33.7" stroke="#000" stroke-width="1.7" fill="none"/></svg><span class="t" style="left:993.60px;top:60px;font-size:22.4px;color:#000;font-weight:700;transform:scaleX(1.0338);transform-origin:0 0;">MagicSlides</span></div><div style="left:0px;top:23px"><span class="t" style="left:295.30px;top:295px;font-size:43px;color:#000;font-weight:700;transform:scaleX(0.6195);transform-origin:0 0;letter-spacing:4.2px;text-shadow:1.1px 0 #000,-1.1px 0 #000,2.2px 0 #000,-2.2px 0 #000;">Professional</span><span class="t" style="left:496.60px;top:295px;font-size:43px;color:#000;font-weight:700;transform:scaleX(0.6342);transform-origin:0 0;letter-spacing:4.2px;text-shadow:1.1px 0 #000,-1.1px 0 #000,2.2px 0 #000,-2.2px 0 #000;">Presentations</span><span class="t" style="left:720.50px;top:295px;font-size:43px;color:#000;font-weight:700;transform:scaleX(0.6155);transform-origin:0 0;letter-spacing:4.2px;text-shadow:1.1px 0 #000,-1.1px 0 #000,2.2px 0 #000,-2.2px 0 #000;">in</span><span class="t" style="left:759.10px;top:295px;font-size:43px;color:#000;font-weight:700;transform:scaleX(0.6126);transform-origin:0 0;letter-spacing:4.2px;text-shadow:1.1px 0 #000,-1.1px 0 #000,2.2px 0 #000,-2.2px 0 #000;">Seconds</span><span class="t" style="left:895.70px;top:295px;font-size:43px;color:#000;font-weight:700;transform:scaleX(0.6266);transform-origin:0 0;letter-spacing:4.2px;text-shadow:1.1px 0 #000,-1.1px 0 #000,2.2px 0 #000,-2.2px 0 #000;">with</span><span class="t" style="left:969.40px;top:295px;font-size:43px;color:#000;font-weight:700;transform:scaleX(0.6361);transform-origin:0 0;letter-spacing:4.2px;text-shadow:1.1px 0 #000,-1.1px 0 #000,2.2px 0 #000,-2.2px 0 #000;">AI</span></div><span class="t" style="left:171.20px;top:387px;font-size:31.2px;color:#000;letter-spacing:0.549px;">Never start from a blank slide again.</span><span class="t" style="left:190.80px;top:439px;font-size:31.2px;color:#000;letter-spacing:0.569px;">Create presentation from text, YouTube, pdf</span><span class="t" style="left:190.20px;top:473px;font-size:31.2px;color:#000;letter-spacing:0.154px;">No Credit Card Required</span><span class="t" style="left:190.20px;top:509px;font-size:31.2px;color:#000;letter-spacing:0.532px;">No need to learn new tool</span><div style="left:172.89999999999998px;top:450.4px;width:8.2px;height:8.2px;border-radius:50%;background:#000"></div><div style="left:172.89999999999998px;top:484.4px;width:8.2px;height:8.2px;border-radius:50%;background:#000"></div><div style="left:172.89999999999998px;top:520.4px;width:8.2px;height:8.2px;border-radius:50%;background:#000"></div></div></div><div style="left:43.7px;top:630.7px;width:198.3px;height:112.2px;background:#fff;border:1px solid #c9c9c9;overflow:hidden"></div><div style="left:44px;top:631px;width:198px;height:111px;overflow:hidden"><div style="left:0;top:0;width:1293px;height:728px;transform:scale(0.15313);transform-origin:0 0"><div style="left:0px;top:7px"><svg style="left:950px;top:51px;" width="40" height="38" viewBox="0 0 40 38"><rect x="3.9" y="4" width="30.2" height="21.6" rx="1.6" fill="#000"/><rect x="8" y="15.1" width="6.3" height="7.1" fill="#fff"/><rect x="16.4" y="11.3" width="6.2" height="10.9" fill="#fff"/><rect x="24.7" y="7.9" width="5.7" height="14.3" fill="#fff"/><path d="M14.8 25.6 L12.5 33.7 M19.2 25.6 V33.7 M23.3 25.6 L25.7 33.7" stroke="#000" stroke-width="1.7" fill="none"/></svg><span class="t" style="left:993.60px;top:60px;font-size:22.4px;color:#000;font-weight:700;transform:scaleX(1.0338);transform-origin:0 0;">MagicSlides</span></div><div style="left:0px;top:23px"><span class="t" style="left:295.30px;top:295px;font-size:43px;color:#000;font-weight:700;transform:scaleX(0.6195);transform-origin:0 0;letter-spacing:4.2px;text-shadow:1.1px 0 #000,-1.1px 0 #000,2.2px 0 #000,-2.2px 0 #000;">Professional</span><span class="t" style="left:496.60px;top:295px;font-size:43px;color:#000;font-weight:700;transform:scaleX(0.6342);transform-origin:0 0;letter-spacing:4.2px;text-shadow:1.1px 0 #000,-1.1px 0 #000,2.2px 0 #000,-2.2px 0 #000;">Presentations</span><span class="t" style="left:720.50px;top:295px;font-size:43px;color:#000;font-weight:700;transform:scaleX(0.6155);transform-origin:0 0;letter-spacing:4.2px;text-shadow:1.1px 0 #000,-1.1px 0 #000,2.2px 0 #000,-2.2px 0 #000;">in</span><span class="t" style="left:759.10px;top:295px;font-size:43px;color:#000;font-weight:700;transform:scaleX(0.6126);transform-origin:0 0;letter-spacing:4.2px;text-shadow:1.1px 0 #000,-1.1px 0 #000,2.2px 0 #000,-2.2px 0 #000;">Seconds</span><span class="t" style="left:895.70px;top:295px;font-size:43px;color:#000;font-weight:700;transform:scaleX(0.6266);transform-origin:0 0;letter-spacing:4.2px;text-shadow:1.1px 0 #000,-1.1px 0 #000,2.2px 0 #000,-2.2px 0 #000;">with</span><span class="t" style="left:969.40px;top:295px;font-size:43px;color:#000;font-weight:700;transform:scaleX(0.6361);transform-origin:0 0;letter-spacing:4.2px;text-shadow:1.1px 0 #000,-1.1px 0 #000,2.2px 0 #000,-2.2px 0 #000;">AI</span></div><span class="t" style="left:171.20px;top:387px;font-size:31.2px;color:#000;letter-spacing:0.549px;">Never start from a blank slide again.</span><span class="t" style="left:190.80px;top:439px;font-size:31.2px;color:#000;letter-spacing:0.569px;">Create presentation from text, YouTube, pdf</span><span class="t" style="left:190.20px;top:473px;font-size:31.2px;color:#000;letter-spacing:0.154px;">No Credit Card Required</span><span class="t" style="left:190.20px;top:509px;font-size:31.2px;color:#000;letter-spacing:0.532px;">No need to learn new tool</span><div style="left:172.89999999999998px;top:450.4px;width:8.2px;height:8.2px;border-radius:50%;background:#000"></div><div style="left:172.89999999999998px;top:484.4px;width:8.2px;height:8.2px;border-radius:50%;background:#000"></div><div style="left:172.89999999999998px;top:520.4px;width:8.2px;height:8.2px;border-radius:50%;background:#000"></div></div><div style="left:67.4px;top:81.9px;width:19.5px;height:0.8px;background:#0563c1"></div><div style="left:67.4px;top:77.2px;width:19.5px;height:4.6px;background:rgba(5,99,193,0.2)"></div></div><div style="left:43.7px;top:767.7px;width:198.3px;height:112.2px;background:#fff;border:1px solid #c9c9c9;overflow:hidden"></div><div style="left:44px;top:768px;width:198px;height:111px;overflow:hidden"><svg style="left:0;top:0" width="198" height="111" viewBox="0 0 198 111"><defs><filter id="nz" x="0" y="0" width="100%" height="100%"><feTurbulence type="fractalNoise" baseFrequency="0.85" numOctaves="2" seed="4"/><feColorMatrix type="matrix" values="0.6 0.6 0.6 0 0.12  0.6 0.6 0.6 0 0.12  0.6 0.6 0.6 0 0.12  0 0 0 0 1"/></filter><linearGradient id="g5" x1="0" y1="0" x2="0" y2="1"><stop offset="0" stop-color="#555" stop-opacity="0.55"/><stop offset="0.16" stop-color="#777" stop-opacity="0.35"/><stop offset="0.3" stop-color="#fff" stop-opacity="0.12"/><stop offset="1" stop-color="#fff" stop-opacity="0.22"/></linearGradient></defs><rect x="61" y="35" width="72.9" height="48.5" fill="#a4a4a4"/><rect x="61" y="35" width="72.9" height="48.5" filter="url(#nz)" opacity="0.7"/><rect x="61" y="35" width="72.9" height="48.5" fill="url(#g5)"/><path d="M71 60 C72 56.6 78 56 84 57 L89 56 L91 52 L95.4 52.4 L96.6 57.4 L93 59 L91.6 64 L90.6 75 L89 75 L88.4 67.4 L80 67.6 L77.6 75.6 L76 75.6 L76.6 67 L73 65.6 L71.6 70 L70.6 70 Z" fill="#333" opacity="0.85"/><rect x="86.8" y="39.7" width="25.3" height="22.5" fill="#a98524" opacity="0.86"/><path d="M96 58 L92 48 L90 42 M96.6 57 L95 46 M99 57 L102 47 L106 42 M99.6 58 L104 50" stroke="#6a4a1a" stroke-width="0.8" fill="none" opacity="0.9"/><path d="M94.6 56.4 L100.6 56.4 L99.6 62.2 L95.6 62.2 Z" fill="#7a5a2a"/></svg><div style="left:0;top:0;width:1293px;height:728px;transform:scale(0.15313);transform-origin:0 0"><div style="left:0px;top:7px"><svg style="left:950px;top:51px;" width="40" height="38" viewBox="0 0 40 38"><rect x="3.9" y="4" width="30.2" height="21.6" rx="1.6" fill="#000"/><rect x="8" y="15.1" width="6.3" height="7.1" fill="#fff"/><rect x="16.4" y="11.3" width="6.2" height="10.9" fill="#fff"/><rect x="24.7" y="7.9" width="5.7" height="14.3" fill="#fff"/><path d="M14.8 25.6 L12.5 33.7 M19.2 25.6 V33.7 M23.3 25.6 L25.7 33.7" stroke="#000" stroke-width="1.7" fill="none"/></svg><span class="t" style="left:993.60px;top:60px;font-size:22.4px;color:#000;font-weight:700;transform:scaleX(1.0338);transform-origin:0 0;">MagicSlides</span></div></div></div><div style="left:0;top:196px;width:291px;height:797px;overflow:hidden"><div style="left:43.7px;top:708.7px;width:198.3px;height:112.2px;background:#fff;border:1px solid #c9c9c9;overflow:hidden"></div><div style="left:44px;top:709px;width:198px;height:111px;overflow:hidden"><svg style="left:0;top:0" width="198" height="111" viewBox="0 0 198 111"><rect x="73.1" y="11.5" width="35.5" height="2.2" fill="#555" opacity="0.42"/><rect x="25.3" y="17.400000000000002" width="63.2" height="2.2" fill="#555" opacity="0.42"/><rect x="25.3" y="21.5" width="28.4" height="2.2" fill="#555" opacity="0.42"/><rect x="25.3" y="30.400000000000002" width="50.6" height="2.2" fill="#555" opacity="0.42"/><rect x="26.2" y="35.199999999999996" width="81.2" height="2.2" fill="#555" opacity="0.42"/><rect x="26.2" y="39.4" width="80.5" height="2.2" fill="#555" opacity="0.42"/><rect x="26.2" y="44.4" width="97.3" height="2.2" fill="#555" opacity="0.42"/><rect x="25.3" y="52.199999999999996" width="36.4" height="2.2" fill="#555" opacity="0.42"/><rect x="26.2" y="56.5" width="89.5" height="2.2" fill="#555" opacity="0.42"/><rect x="26.2" y="61.0" width="77.6" height="2.2" fill="#555" opacity="0.42"/><rect x="26.2" y="65.2" width="107.7" height="2.2" fill="#555" opacity="0.42"/><rect x="25.3" y="74.2" width="19.4" height="2.2" fill="#555" opacity="0.42"/><rect x="30" y="79.2" width="64.4" height="2.2" fill="#555" opacity="0.42"/><rect x="30" y="83.39999999999999" width="86.8" height="2.2" fill="#555" opacity="0.42"/></svg><div style="left:0;top:0;width:1293px;height:728px;transform:scale(0.15313);transform-origin:0 0"><div style="left:0px;top:7px"><svg style="left:950px;top:51px;" width="40" height="38" viewBox="0 0 40 38"><rect x="3.9" y="4" width="30.2" height="21.6" rx="1.6" fill="#000"/><rect x="8" y="15.1" width="6.3" height="7.1" fill="#fff"/><rect x="16.4" y="11.3" width="6.2" height="10.9" fill="#fff"/><rect x="24.7" y="7.9" width="5.7" height="14.3" fill="#fff"/><path d="M14.8 25.6 L12.5 33.7 M19.2 25.6 V33.7 M23.3 25.6 L25.7 33.7" stroke="#000" stroke-width="1.7" fill="none"/></svg><span class="t" style="left:993.60px;top:60px;font-size:22.4px;color:#000;font-weight:700;transform:scaleX(1.0338);transform-origin:0 0;">MagicSlides</span></div></div></div></div><div style="left:267px;top:198px;width:19px;height:792px;background:#f0f0f0"></div><div style="left:267px;top:198px;width:19px;height:19px;background:#fff;border:1px solid #929292"></div><div style="left:267px;top:217px;width:19px;height:604px;background:#fff;border:1px solid #929292"></div><div style="left:267px;top:972px;width:19px;height:19px;background:#fff;border:1px solid #929292"></div><svg style="left:267px;top:198px;" width="19" height="800" viewBox="0 0 19 800"><path d="M4.6 11.2 L9.5 6.2 L14.4 11.2 Z" fill="#111"/><path d="M5 781.2 H14.2 L9.6 786 Z" fill="#111"/></svg><div style="left:290px;top:198px;width:1px;height:795px;background:#bcbcbc"></div>
<div style="left:449px;top:206px;width:1295px;height:730px;background:#fff;border:1px solid #c3c3c3"></div><div style="left:450px;top:207px;width:1293px;height:728px"><div style="left:0px;top:0px"><svg style="left:950px;top:51px;" width="40" height="38" viewBox="0 0 40 38"><rect x="3.9" y="4" width="30.2" height="21.6" rx="1.6" fill="#000"/><rect x="8" y="15.1" width="6.3" height="7.1" fill="#fff"/><rect x="16.4" y="11.3" width="6.2" height="10.9" fill="#fff"/><rect x="24.7" y="7.9" width="5.7" height="14.3" fill="#fff"/><path d="M14.8 25.6 L12.5 33.7 M19.2 25.6 V33.7 M23.3 25.6 L25.7 33.7" stroke="#000" stroke-width="1.7" fill="none"/></svg><span class="t" style="left:993.60px;top:60px;font-size:22.4px;color:#000;font-weight:700;transform:scaleX(1.0338);transform-origin:0 0;">MagicSlides</span></div><div style="left:0px;top:0px"><span class="t" style="left:295.30px;top:295px;font-size:43px;color:#000;font-weight:700;transform:scaleX(0.6195);transform-origin:0 0;letter-spacing:4.2px;text-shadow:1.1px 0 #000,-1.1px 0 #000,2.2px 0 #000,-2.2px 0 #000;">Professional</span><span class="t" style="left:496.60px;top:295px;font-size:43px;color:#000;font-weight:700;transform:scaleX(0.6342);transform-origin:0 0;letter-spacing:4.2px;text-shadow:1.1px 0 #000,-1.1px 0 #000,2.2px 0 #000,-2.2px 0 #000;">Presentations</span><span class="t" style="left:720.50px;top:295px;font-size:43px;color:#000;font-weight:700;transform:scaleX(0.6155);transform-origin:0 0;letter-spacing:4.2px;text-shadow:1.1px 0 #000,-1.1px 0 #000,2.2px 0 #000,-2.2px 0 #000;">in</span><span class="t" style="left:759.10px;top:295px;font-size:43px;color:#000;font-weight:700;transform:scaleX(0.6126);transform-origin:0 0;letter-spacing:4.2px;text-shadow:1.1px 0 #000,-1.1px 0 #000,2.2px 0 #000,-2.2px 0 #000;">Seconds</span><span class="t" style="left:895.70px;top:295px;font-size:43px;color:#000;font-weight:700;transform:scaleX(0.6266);transform-origin:0 0;letter-spacing:4.2px;text-shadow:1.1px 0 #000,-1.1px 0 #000,2.2px 0 #000,-2.2px 0 #000;">with</span><span class="t" style="left:969.40px;top:295px;font-size:43px;color:#000;font-weight:700;transform:scaleX(0.6361);transform-origin:0 0;letter-spacing:4.2px;text-shadow:1.1px 0 #000,-1.1px 0 #000,2.2px 0 #000,-2.2px 0 #000;">AI</span></div><span class="t" style="left:171.20px;top:387px;font-size:31.2px;color:#000;letter-spacing:0.549px;">Never start from a blank slide again.</span><span class="t" style="left:190.80px;top:439px;font-size:31.2px;color:#000;letter-spacing:0.569px;">Create presentation from text, YouTube, pdf</span><span class="t" style="left:190.20px;top:473px;font-size:31.2px;color:#000;letter-spacing:0.154px;">No Credit Card Required</span><span class="t" style="left:190.20px;top:509px;font-size:31.2px;color:#000;letter-spacing:0.532px;">No need to learn new tool</span><div style="left:172.89999999999998px;top:450.4px;width:8.2px;height:8.2px;border-radius:50%;background:#000"></div><div style="left:172.89999999999998px;top:484.4px;width:8.2px;height:8.2px;border-radius:50%;background:#000"></div><div style="left:172.89999999999998px;top:520.4px;width:8.2px;height:8.2px;border-radius:50%;background:#000"></div></div><svg style="left:0;top:0" width="1919" height="1015" viewBox="0 0 1919 1015"><path d="M611.5 325.5 H1582.5 V552.5 H611.5 Z M611.5 588.5 H1582.5 V765.5 H611.5 Z" fill="none" stroke="#666" stroke-width="1.15"/><path d="M1096.5 296 V320 M1096.5 559.6 V583" stroke="#666" stroke-width="1"/><circle cx="611.9" cy="325.9" r="5.85" fill="#fff" stroke="#5c5c5c" stroke-width="2.05"/><circle cx="1096.9" cy="325.9" r="5.85" fill="#fff" stroke="#5c5c5c" stroke-width="2.05"/><circle cx="1582.4" cy="325.9" r="5.85" fill="#fff" stroke="#5c5c5c" stroke-width="2.05"/><circle cx="611.9" cy="439.3" r="5.85" fill="#fff" stroke="#5c5c5c" stroke-width="2.05"/><circle cx="1582.4" cy="439.3" r="5.85" fill="#fff" stroke="#5c5c5c" stroke-width="2.05"/><circle cx="611.9" cy="552.6" r="5.85" fill="#fff" stroke="#5c5c5c" stroke-width="2.05"/><circle cx="1096.9" cy="552.6" r="5.85" fill="#fff" stroke="#5c5c5c" stroke-width="2.05"/><circle cx="1582.4" cy="552.6" r="5.85" fill="#fff" stroke="#5c5c5c" stroke-width="2.05"/><path d="M1102.56 291.50 A9.55 9.55 0 1 1 1106.90 281.74" fill="none" stroke="#5c5c5c" stroke-width="6.9"/><path d="M1099.10 281.50 H1116.50 L1107.10 291.20 Z" fill="#fff" stroke="#5c5c5c" stroke-width="2" stroke-linejoin="miter"/><path d="M1102.56 291.50 A9.55 9.55 0 1 1 1106.90 281.74 L1106.60 284.74" fill="none" stroke="#fff" stroke-width="2.8"/><path d="M1102.66 555.00 A9.55 9.55 0 1 1 1107.00 545.24" fill="none" stroke="#5c5c5c" stroke-width="6.9"/><path d="M1099.20 545.00 H1116.60 L1107.20 554.70 Z" fill="#fff" stroke="#5c5c5c" stroke-width="2" stroke-linejoin="miter"/><path d="M1102.66 555.00 A9.55 9.55 0 1 1 1107.00 545.24 L1106.70 548.24" fill="none" stroke="#fff" stroke-width="2.8"/><circle cx="611.9" cy="588.7" r="5.85" fill="#fff" stroke="#5c5c5c" stroke-width="2.05"/><circle cx="1096.9" cy="588.7" r="5.85" fill="#fff" stroke="#5c5c5c" stroke-width="2.05"/><circle cx="1582.4" cy="588.7" r="5.85" fill="#fff" stroke="#5c5c5c" stroke-width="2.05"/><circle cx="611.9" cy="677" r="5.85" fill="#fff" stroke="#5c5c5c" stroke-width="2.05"/><circle cx="1582.4" cy="677" r="5.85" fill="#fff" stroke="#5c5c5c" stroke-width="2.05"/><circle cx="611.9" cy="765.6" r="5.85" fill="#fff" stroke="#5c5c5c" stroke-width="2.05"/><circle cx="1096.9" cy="765.6" r="5.85" fill="#fff" stroke="#5c5c5c" stroke-width="2.05"/><circle cx="1582.4" cy="765.6" r="5.85" fill="#fff" stroke="#5c5c5c" stroke-width="2.05"/></svg><div style="left:1900px;top:196px;width:19px;height:665px;background:#f3f3f3"></div><div style="left:1900px;top:198px;width:19px;height:19px;background:#fff;border:1px solid #8f8f8f"></div><div style="left:1900px;top:217px;width:19px;height:92px;background:#fff;border:1px solid #8f8f8f"></div><div style="left:1900px;top:861px;width:19px;height:19px;background:#fff;border:1px solid #929292"></div><svg style="left:1900px;top:190px;" width="19" height="740" viewBox="0 0 19 740"><path d="M4.9 18.9 L9.5 14.1 L14.1 18.9 Z" fill="#111"/><path d="M5 679 H14 L9.5 683.8 Z" fill="#111"/><path d="M3.6 701.6 L9.6 694 L15.6 701.6 Z M3.6 708.8 L9.6 701 L15.6 708.8 Z" fill="#666"/><path d="M3.6 715 L9.6 722.6 L15.6 715 Z M3.6 722.4 L9.6 730.2 L15.6 722.4 Z" fill="#666"/></svg><div style="left:293px;top:948px;width:1626px;height:1px;background:#bfbfbf"></div><span class="t" style="left:305.40px;top:960px;font-size:18px;color:#595959;letter-spacing:0.101px;">Click to add notes</span>
<div style="left:0px;top:993px;width:1919px;height:1px;background:#c8c8c8"></div><span class="t" style="left:15.10px;top:1001px;font-size:13.6px;color:#3b3b3b;letter-spacing:-0.211px;">Slide 1 of 7</span><span class="t" style="left:145.40px;top:1001px;font-size:13.6px;color:#3b3b3b;transform:scaleX(0.9278);transform-origin:0 0;">English (United States)</span><span class="t" style="left:317.40px;top:1001px;font-size:13.6px;color:#262626;font-weight:700;transform:scaleX(0.9333);transform-origin:0 0;">Accessibility: Investigate</span><span class="t" style="left:1308.20px;top:1001px;font-size:13.6px;color:#3b3b3b;letter-spacing:-0.329px;">Notes</span><span class="t" style="left:1389.40px;top:1001px;font-size:13.6px;color:#3b3b3b;transform:scaleX(0.9312);transform-origin:0 0;">Comments</span><span class="t" style="left:1854.00px;top:1001px;font-size:13.6px;color:#3b3b3b;transform:scaleX(0.8817);transform-origin:0 0;">81%</span><svg style="left:0;top:0" width="1919" height="1015" viewBox="0 0 1919 1015"><path d="M105.6 1000.6 H112.6 L113.6 1001.8 V1011.6 L112.6 1010.6 H105.6 Z M113.6 1001.8 L114.6 1000.6 H118" fill="none" stroke="#6a6a6a" stroke-width="1"/><path d="M114.6 1010.6 L121.6 1003.2 L119.6 1001.4 L113.8 1008 Z" fill="#f3f3f3" stroke="#6a6a6a" stroke-width="0.9"/><path d="M301.6 998.6 V1003 M305.6 1002.4 A5.6 5.6 0 1 0 302.6 1012" fill="none" stroke="#6a6a6a" stroke-width="1.1" stroke-dasharray="3 1.6"/><path d="M298.6 1003.4 L301.6 1006 L304.6 1003.4" fill="none" stroke="#6a6a6a" stroke-width="1.1"/><path d="M305.4 1006.4 L311.6 1012.8 M311.6 1006.4 L305.4 1012.8" stroke="#333" stroke-width="1.5"/><path d="M1292.4 1003 L1295.4 1000.2 L1298.4 1003 Z" fill="#6a6a6a"/><path d="M1288.8 1005.4 H1302 M1288.8 1008.2 H1302 M1288.8 1011 H1298" stroke="#6a6a6a" stroke-width="1"/><path d="M1369.4 999.4 H1385 Q1386 999.4 1386 1000.4 V1009.4 Q1386 1010.4 1385 1010.4 H1376.4 L1372.6 1014.4 V1010.4 H1369.4 Q1368.4 1010.4 1368.4 1009.4 V1000.4 Q1368.4 999.4 1369.4 999.4 Z" fill="#555"/><rect x="1492" y="999" width="16" height="14.6" fill="none" stroke="#6a6a6a" stroke-width="1"/><path d="M1496.4 999 V1013.6 M1496.4 1008.6 H1508" stroke="#6a6a6a" stroke-width="1"/><rect x="1499" y="1001.4" width="6.4" height="4.6" fill="none" stroke="#6a6a6a" stroke-width="0.9"/><rect x="1541.7" y="999.3" width="6" height="5.4" fill="none" stroke="#6a6a6a" stroke-width="1"/><rect x="1551" y="999.3" width="6" height="5.4" fill="none" stroke="#6a6a6a" stroke-width="1"/><rect x="1541.7" y="1008" width="6" height="5.4" fill="none" stroke="#6a6a6a" stroke-width="1"/><rect x="1551" y="1008" width="6" height="5.4" fill="none" stroke="#6a6a6a" stroke-width="1"/><path d="M1599 1000.6 C1596 999 1593.6 999 1591.2 999.6 V1011.8 C1593.6 1011.2 1596 1011.2 1599 1012.8 C1602 1011.2 1604.4 1011.2 1606.8 1011.8 V999.6 C1604.4 999 1602 999 1599 1000.6 V1014.6" fill="none" stroke="#6a6a6a" stroke-width="1"/><path d="M1593 1002.6 H1597 M1593 1005 H1597 M1593 1007.4 H1597 M1601 1002.6 H1605 M1601 1005 H1605 M1601 1007.4 H1605" stroke="#6a6a6a" stroke-width="0.8"/><path d="M1641 999.4 H1658" stroke="#6a6a6a" stroke-width="1.4"/><path d="M1643 1000 V1008.4 H1656 V1000" fill="none" stroke="#6a6a6a" stroke-width="1"/><path d="M1649.5 1008.4 V1013.6 M1646 1013.8 H1653" stroke="#6a6a6a" stroke-width="1"/><path d="M1682 1007 H1691.4 M1829 1007 H1838.4 M1833.7 1002.3 V1011.7" stroke="#555" stroke-width="1.1"/><path d="M1697.8 1007 H1823" stroke="#555" stroke-width="1"/><path d="M1760.4 1003 V1011" stroke="#555" stroke-width="1"/><rect x="1744.6" y="999.6" width="6.2" height="14.6" fill="#444"/><rect x="1897.8" y="1000.6" width="13.2" height="12.8" fill="none" stroke="#6a6a6a" stroke-width="1"/><path d="M1904.4 1002.4 V1005 M1904.4 1009 V1011.6 M1899.6 1007 H1902.2 M1906.6 1007 H1909.2" stroke="#6a6a6a" stroke-width="1"/><path d="M1903 1003.8 L1904.4 1002.2 L1905.8 1003.8 M1903 1010.2 L1904.4 1011.8 L1905.8 1010.2 M1901 1005.6 L1899.4 1007 L1901 1008.4 M1907.8 1005.6 L1909.4 1007 L1907.8 1008.4" fill="none" stroke="#6a6a6a" stroke-width="0.8"/></svg>
</div></body></html>
